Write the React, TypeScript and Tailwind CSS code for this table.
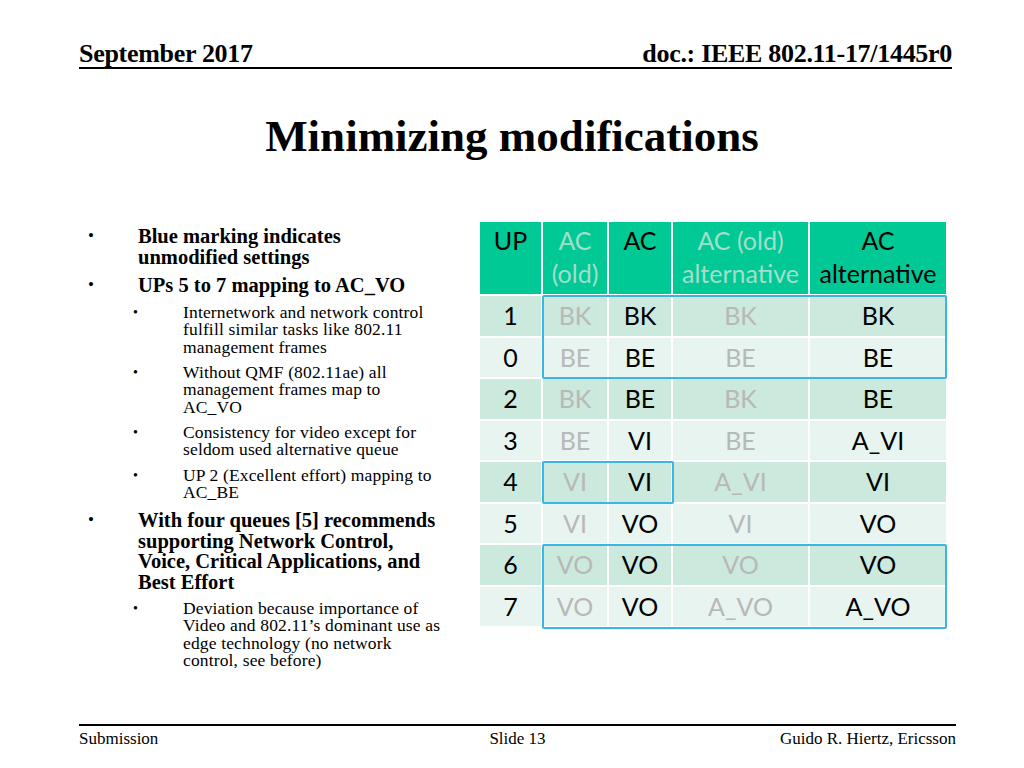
import React from 'react';

type Cell = { text: string; grey?: boolean };

const serif = "font-['Liberation_Serif','Times_New_Roman',serif]";
const sans = "font-['Lato','Open_Sans',sans-serif]";

// table data: UP, AC(old), AC, AC(old) alt, AC alt
const rows: string[][] = [
  ['1', 'BK', 'BK', 'BK', 'BK'],
  ['0', 'BE', 'BE', 'BE', 'BE'],
  ['2', 'BK', 'BE', 'BK', 'BE'],
  ['3', 'BE', 'VI', 'BE', 'A_VI'],
  ['4', 'VI', 'VI', 'A_VI', 'VI'],
  ['5', 'VI', 'VO', 'VI', 'VO'],
  ['6', 'VO', 'VO', 'VO', 'VO'],
  ['7', 'VO', 'VO', 'A_VO', 'A_VO'],
];

const headers: Cell[] = [
  { text: 'UP' },
  { text: 'AC\n(old)', grey: true },
  { text: 'AC' },
  { text: 'AC (old)\nalternative', grey: true },
  { text: 'AC\nalternative' },
];

const Bullet1: React.FC<{ children: React.ReactNode; className?: string }> = ({ children, className }) => (
  <div className={`flex ${className ?? ''}`}>
    <span className="w-[50px] shrink-0 text-[17px] leading-[20.5px]">•</span>
    <p className="text-[20.5px] leading-[20.5px] font-bold whitespace-nowrap">{children}</p>
  </div>
);

const Bullet2: React.FC<{ children: React.ReactNode; className?: string }> = ({ children, className }) => (
  <div className={`flex pl-[45px] ${className ?? ''}`}>
    <span className="w-[50px] shrink-0 text-[14px] leading-[17.5px]">•</span>
    <p className="text-[17.5px] leading-[17.5px] tracking-[0.15px] whitespace-nowrap">{children}</p>
  </div>
);

const MappingTable: React.FC = () => (
  <div className={`relative w-[466px] ${sans}`}>
    <div className="grid grid-cols-[61px_64px_62px_135px_136px] gap-[2px] bg-white">
      {headers.map((h, i) => (
        <div
          key={i}
          className={`h-[72px] bg-[#00c996] pt-[2px] text-center text-[25px] leading-[33px] whitespace-pre-line ${h.grey ? 'text-[#a3decb]' : 'text-black'}`}
        >
          {h.text}
        </div>
      ))}
      {rows.map((r, ri) =>
        r.map((c, ci) => (
          <div
            key={`${ri}-${ci}`}
            className={`h-[39.5px] flex items-center justify-center text-[25px] ${ri % 2 === 0 ? 'bg-[#cce9dd]' : 'bg-[#e8f4ef]'} ${ci === 1 || ci === 3 ? 'text-[#b8b8b8]' : 'text-black'}`}
          >
            {c}
          </div>
        ))
      )}
    </div>
    {/* blue marking overlays */}
    <div className="absolute left-[62px] top-[73px] w-[405px] h-[84px] border-2 border-[#3bb4e6] rounded-[2px]" />
    <div className="absolute left-[62px] top-[239px] w-[132px] h-[43px] border-2 border-[#3bb4e6] rounded-[2px]" />
    <div className="absolute left-[62px] top-[322px] w-[405px] h-[85px] border-2 border-[#3bb4e6] rounded-[2px]" />
  </div>
);

export default function App() {
  return (
    <div className={`w-[1024px] h-[768px] bg-white text-black flex flex-col ${serif}`}>
      {/* header */}
      <div className="mt-[42px] ml-[79px] mr-[72px] flex items-end justify-between border-b-2 border-black pb-[1px]">
        <span className="text-[26px] leading-[24px] font-bold tracking-[-0.3px]">September 2017</span>
        <span className="text-[26px] leading-[24px] font-bold tracking-[-0.3px]">doc.: IEEE 802.11-17/1445r0</span>
      </div>

      {/* title */}
      <h1 className="mt-[42px] text-center text-[45px] leading-[50px] font-bold">Minimizing modifications</h1>

      {/* body */}
      <div className="mt-[61px] flex">
        <div className="ml-[88px] mt-[4px] w-[370px] flex flex-col">
          <Bullet1>Blue marking indicates<br />unmodified settings</Bullet1>
          <Bullet1 className="mt-[8px]">UPs 5 to 7 mapping to AC_VO</Bullet1>
          <Bullet2 className="mt-[8px]">Internetwork and network control<br />fulfill similar tasks like 802.11<br />management frames</Bullet2>
          <Bullet2 className="mt-[7.5px]">Without QMF (802.11ae) all<br />management frames map to<br />AC_VO</Bullet2>
          <Bullet2 className="mt-[7.5px]">Consistency for video except for<br />seldom used alternative queue</Bullet2>
          <Bullet2 className="mt-[8px]">UP 2 (Excellent effort) mapping to<br />AC_BE</Bullet2>
          <Bullet1 className="mt-[8.5px]">With four queues [5] recommends<br />supporting Network Control,<br />Voice, Critical Applications, and<br />Best Effort</Bullet1>
          <Bullet2 className="mt-[7.5px]">Deviation because importance of<br />Video and 802.11’s dominant use as<br />edge technology (no network<br />control, see before)</Bullet2>
        </div>
        <div className="ml-[22px]">
          <MappingTable />
        </div>
      </div>

      {/* footer */}
      <div className="mt-auto mb-[20px] ml-[79px] mr-[68px] border-t-2 border-black pt-[4px] flex justify-between text-[17px] leading-[18px]">
        <span className="w-[200px]">Submission</span>
        <span>Slide 13</span>
        <span className="w-[200px] text-right">Guido R. Hiertz, Ericsson</span>
      </div>
    </div>
  );
}
